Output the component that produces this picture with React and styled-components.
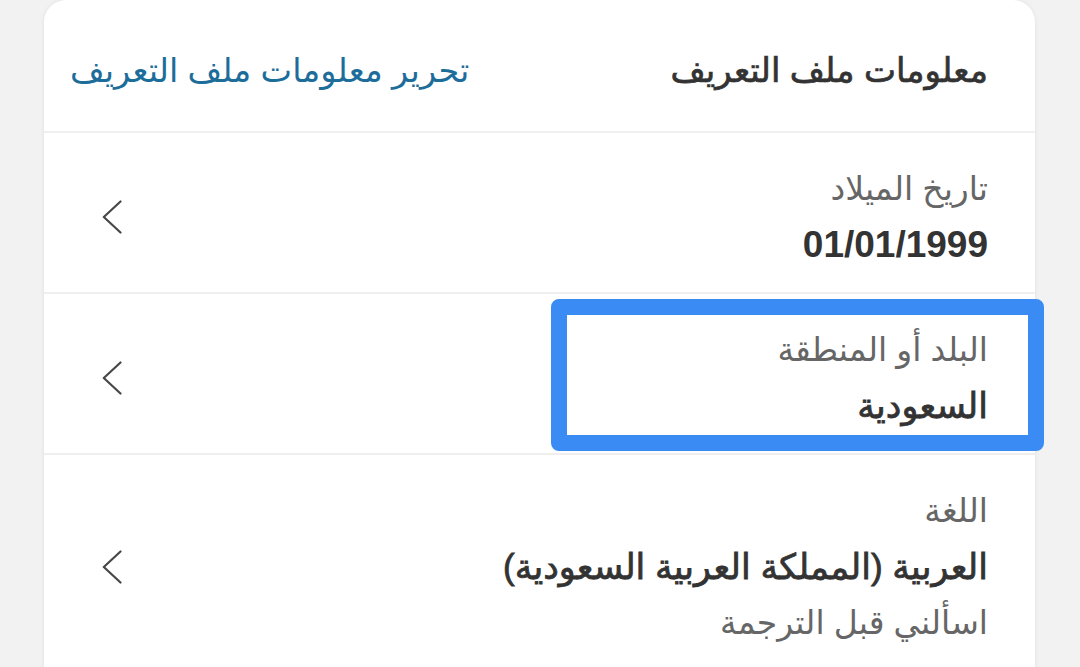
import React from "react";
import styled, { createGlobalStyle } from "styled-components";

const GlobalStyle = createGlobalStyle`
  html, body {
    margin: 0;
    padding: 0;
    background: #f2f2f2;
  }
  body {
    font-family: "Liberation Sans", "DejaVu Sans", sans-serif;
  }
`;

const Chevron = () => (
  <svg width="20" height="34" viewBox="0 0 20 34" fill="none">
    <polyline
      points="18.5,1.5 1.8,17 18.5,32.5"
      stroke="#474747"
      strokeWidth="2.2"
      strokeLinecap="round"
      strokeLinejoin="round"
    />
  </svg>
);

const rows = [
  { label: "تاريخ الميلاد", value: "01/01/1999", numeric: true },
  { label: "البلد أو المنطقة", value: "السعودية", focused: true },
  {
    label: "اللغة",
    value: "العربية (المملكة العربية السعودية)",
    note: "اسألني قبل الترجمة",
  },
];

export default function App() {
  return (
    <>
      <GlobalStyle />
      <Page>
        <Card dir="rtl">
          <Header>
            <Title>معلومات ملف التعريف</Title>
            <EditLink href="#">تحرير معلومات ملف التعريف</EditLink>
          </Header>
          {rows.map((r) => (
            <Row key={r.label} $focused={r.focused}>
              <Info>
                <Label>{r.label}</Label>
                <Value $numeric={r.numeric}>{r.value}</Value>
                {r.note && <Label>{r.note}</Label>}
              </Info>
              <Arrow>
                <Chevron />
              </Arrow>
            </Row>
          ))}
        </Card>
      </Page>
    </>
  );
}

const Page = styled.div`
  min-height: 667px;
  padding: 0 45px 0 44px;
  box-sizing: border-box;
`;

const Card = styled.section`
  background: #fff;
  border-radius: 22px 22px 0 0;
  box-shadow: 0 0 4px rgba(0, 0, 0, 0.08);
  min-height: 667px;
`;

const Header = styled.div`
  height: 133px;
  display: flex;
  align-items: center;
  justify-content: space-between;
  padding: 9px 47px 0 26px;
  border-bottom: 2px solid #efefef;
  box-sizing: border-box;
`;

const Title = styled.h2`
  margin: 0;
  font-size: 34px;
  font-weight: 400;
  color: #333;
  -webkit-text-stroke: 0.7px #333;
`;

const EditLink = styled.a`
  font-size: 33.5px;
  color: #1d6d9b;
  text-decoration: none;
`;

const Row = styled.div`
  position: relative;
  display: flex;
  align-items: center;
  justify-content: space-between;
  padding: 28px 47px 19px 58px;
  border-bottom: 2px solid #efefef;

  &::after {
    content: "";
    display: ${(p) => (p.$focused ? "block" : "none")};
    position: absolute;
    top: 5px;
    bottom: 2px;
    left: 507px;
    right: -9px;
    border: 16px solid #3a8cf4;
    border-radius: 8px;
    pointer-events: none;
  }
`;

const Info = styled.div`
  display: flex;
  flex-direction: column;
`;

const Label = styled.div`
  font-size: 33px;
  line-height: 56px;
  color: #666;
`;

const Value = styled.div`
  font-size: ${(p) => (p.$numeric ? "37px" : "35px")};
  line-height: 56px;
  font-weight: ${(p) => (p.$numeric ? 700 : 400)};
  -webkit-text-stroke: ${(p) => (p.$numeric ? "0" : "0.8px #333")};
  color: #333;
`;

const Arrow = styled.div`
  display: flex;
  align-items: center;
`;
